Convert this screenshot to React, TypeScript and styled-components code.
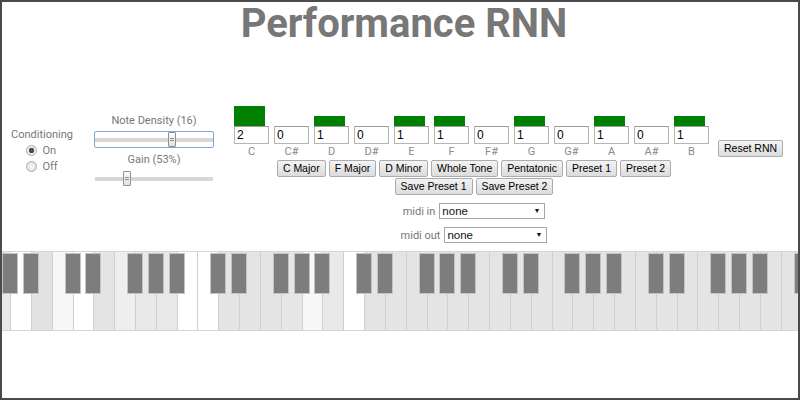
import styled, { createGlobalStyle } from "styled-components";

const GlobalStyle = createGlobalStyle`
  html, body {
    margin: 0;
    padding: 0;
    background: #fff;
  }
  body {
    font-family: Roboto, "Liberation Sans", Arial, sans-serif;
  }
`;

const Frame = styled.div`
  width: 800px;
  height: 400px;
  box-sizing: border-box;
  border: 2px solid #4a4a4a;
  overflow: hidden;
  background: #fff;
`;

const Title = styled.h1`
  margin: 0;
  padding-left: 8px;
  text-align: center;
  font-family: Roboto, "Liberation Sans", sans-serif;
  font-weight: 700;
  font-size: 40px;
  line-height: 44px;
  color: #777;
`;

const Controls = styled.div`
  display: flex;
  align-items: center;
  margin-top: 60px;
`;

const ConditioningCol = styled.div`
  width: 80px;
  display: flex;
  flex-direction: column;
  align-items: center;
  font-size: 11px;
  color: #777;
`;

const ColLabel = styled.div`
  line-height: 16px;
`;

const RadioGroup = styled.div`
  display: flex;
  flex-direction: column;
  align-items: flex-start;
`;

const RadioRow = styled.label`
  display: flex;
  align-items: center;
  gap: 5px;
  height: 16px;
  line-height: 16px;
`;

const RadioDot = styled.span<{ $checked?: boolean }>`
  width: 11px;
  height: 11px;
  box-sizing: border-box;
  border-radius: 50%;
  border: 1px solid #a8a8a8;
  background: ${(p) =>
    p.$checked
      ? "radial-gradient(circle, #4c4c4c 0 2.5px, #ededed 3px)"
      : "radial-gradient(circle, #f6f6f6 0, #dcdcdc 100%)"};
`;

const SliderCol = styled.div`
  width: 120px;
  margin-left: 12px;
  display: flex;
  flex-direction: column;
  align-items: center;
  font-size: 11px;
  color: #777;
`;

const SliderLabel = styled.div<{ $gap?: number }>`
  line-height: 14px;
  margin-top: ${(p) => p.$gap ?? 0}px;
`;

const Range = styled.input<{ $focused?: boolean }>`
  -webkit-appearance: none;
  appearance: none;
  width: 120px;
  height: 17px;
  margin: 3px 0 0;
  box-sizing: border-box;
  border: 1px solid ${(p) => (p.$focused ? "#7fa7de" : "transparent")};
  border-radius: 2px;
  background: transparent;
  outline: none;

  &::-webkit-slider-runnable-track {
    height: 4px;
    background: #dcd6d2;
  }

  &::-webkit-slider-thumb {
    -webkit-appearance: none;
    width: 8px;
    height: 15px;
    margin-top: -6px;
    box-sizing: border-box;
    border: 1px solid #8e8e8e;
    border-radius: 1px;
    background:
      linear-gradient(
          to bottom,
          transparent 5px,
          #8a8a8a 5px,
          #8a8a8a 6px,
          transparent 6px,
          transparent 7px,
          #8a8a8a 7px,
          #8a8a8a 8px,
          transparent 8px
        )
        center / 4px 100% no-repeat,
      linear-gradient(#fbfbfb, #e2e2e2);
  }
`;

const Histogram = styled.div`
  width: 480px;
  margin-left: 20px;
  display: flex;
  flex-direction: column;
`;

const PitchRow = styled.div`
  display: flex;
`;

const PitchCell = styled.div`
  width: 40px;
  display: flex;
  flex-direction: column;
`;

const BarArea = styled.div`
  height: 20px;
  display: flex;
  align-items: flex-end;
`;

const Bar = styled.div`
  width: 31px;
  background: #008000;
`;

const CountInput = styled.input`
  width: 35px;
  height: 18px;
  box-sizing: border-box;
  margin: 0;
  padding: 0 2px;
  border: 1px solid #b5b5b5;
  border-top-color: #9c9c9c;
  font-family: "Liberation Sans", Arial, sans-serif;
  font-size: 12px;
  color: #000;
  background: #fff;
`;

const NoteName = styled.div`
  width: 35px;
  text-align: center;
  font-size: 11px;
  line-height: 16px;
  color: #8a8a8a;
`;

const ButtonRow = styled.div<{ $gap?: number }>`
  display: flex;
  justify-content: center;
  gap: 3px;
  margin-top: ${(p) => p.$gap ?? 0}px;
`;

const Button = styled.button`
  height: 17px;
  margin: 0;
  padding: 0 5px;
  box-sizing: border-box;
  border: 1px solid #acacac;
  border-radius: 2px;
  background: linear-gradient(#f3f3f3, #dcdcdc);
  font-family: "Liberation Sans", Arial, sans-serif;
  font-size: 10.5px;
  line-height: 15px;
  color: #000;
  white-space: nowrap;
`;

const ResetButton = styled(Button)`
  margin-left: 4px;
  margin-bottom: 4px;
`;

const MidiBlock = styled.div`
  width: 480px;
  margin: 8px 0 0 232px;
  display: flex;
  flex-direction: column;
  gap: 8px;
`;

const MidiRow = styled.div`
  display: flex;
  justify-content: center;
  align-items: center;
  gap: 4px;
  height: 16px;
  font-size: 11px;
  color: #777;
`;

const SelectBox = styled.div<{ $width: number }>`
  position: relative;
  width: ${(p) => p.$width}px;
  height: 16px;
`;

const Select = styled.select`
  -webkit-appearance: none;
  appearance: none;
  width: 100%;
  height: 100%;
  box-sizing: border-box;
  margin: 0;
  padding: 0 2px;
  border: 1px solid #a6a6a6;
  border-radius: 0;
  background: #fff;
  font-family: "Liberation Sans", Arial, sans-serif;
  font-size: 11.5px;
  color: #111;
`;

const SelectArrow = styled.span`
  position: absolute;
  right: 5px;
  top: 4px;
  font-size: 7px;
  line-height: 8px;
  color: #111;
  pointer-events: none;
`;

const Piano = styled.div`
  position: relative;
  margin-top: 8px;
  height: 80px;
  box-sizing: border-box;
  border-top: 1px solid #d6d6d6;
  border-bottom: 1px solid #d6d6d6;
  overflow: hidden;
`;

const KeyRow = styled.div`
  display: flex;
  height: 100%;
  margin-left: -12.8px;
`;

const WhiteKey = styled.div<{ $shade: string }>`
  position: relative;
  flex: 0 0 20.833px;
  height: 100%;
  box-sizing: border-box;
  border-left: 1px solid #cfcfcf;
  background: ${(p) => p.$shade};
`;

const BlackKey = styled.div`
  position: absolute;
  z-index: 2;
  top: 1px;
  right: -8px;
  width: 16px;
  height: 41px;
  box-sizing: border-box;
  border: 1px solid #c4c4c4;
  background: #7d7d7d;
`;

const pitches = [
  { name: "C", count: 2 },
  { name: "C#", count: 0 },
  { name: "D", count: 1 },
  { name: "D#", count: 0 },
  { name: "E", count: 1 },
  { name: "F", count: 1 },
  { name: "F#", count: 0 },
  { name: "G", count: 1 },
  { name: "G#", count: 0 },
  { name: "A", count: 1 },
  { name: "A#", count: 0 },
  { name: "B", count: 1 },
];

const presets = [
  "C Major",
  "F Major",
  "D Minor",
  "Whole Tone",
  "Pentatonic",
  "Preset 1",
  "Preset 2",
];

// white keys begin on a G that is partly cut off at the left edge
const whiteNames = ["G", "A", "B", "C", "D", "E", "F"];
const lit = [
  "#e8e8e8", "#ffffff", "#e2e2e2", "#f7f7f7", "#ffffff", "#e4e4e4",
  "#eeeeee", "#e8e8e8", "#e8e8e8", "#ffffff", "#ffffff", "#e4e4e4",
  "#e4e4e4", "#e4e4e4", "#e6e6e6", "#f7f7f7", "#e9e9e9", "#ffffff",
];
const hasSharp = new Set(["C", "D", "F", "G", "A"]);
const keys = Array.from({ length: 40 }, (_, i) => ({
  name: whiteNames[i % 7],
  shade: lit[i] ?? "#e4e4e4",
}));

export default function App() {
  return (
    <>
      <GlobalStyle />
      <Frame>
        <Title>Performance RNN</Title>

        <Controls>
          <ConditioningCol>
            <ColLabel>Conditioning</ColLabel>
            <RadioGroup>
              <RadioRow>
                <RadioDot $checked />
                On
              </RadioRow>
              <RadioRow>
                <RadioDot />
                Off
              </RadioRow>
            </RadioGroup>
          </ConditioningCol>

          <SliderCol>
            <SliderLabel>Note Density (16)</SliderLabel>
            <Range type="range" min={0} max={100} defaultValue={66} $focused />
            <SliderLabel $gap={5}>Gain (53%)</SliderLabel>
            <Range type="range" min={0} max={100} defaultValue={25} />
          </SliderCol>

          <Histogram>
            <PitchRow>
              {pitches.map((p) => (
                <PitchCell key={p.name}>
                  <BarArea>
                    {p.count > 0 && <Bar style={{ height: p.count * 10 }} />}
                  </BarArea>
                  <CountInput type="text" defaultValue={p.count} />
                  <NoteName>{p.name}</NoteName>
                </PitchCell>
              ))}
            </PitchRow>
            <ButtonRow>
              {presets.map((b) => (
                <Button key={b}>{b}</Button>
              ))}
            </ButtonRow>
            <ButtonRow $gap={1}>
              <Button>Save Preset 1</Button>
              <Button>Save Preset 2</Button>
            </ButtonRow>
          </Histogram>

          <ResetButton>Reset RNN</ResetButton>
        </Controls>

        <MidiBlock>
          <MidiRow>
            midi in
            <SelectBox $width={106}>
              <Select defaultValue="none">
                <option value="none">none</option>
              </Select>
              <SelectArrow>▼</SelectArrow>
            </SelectBox>
          </MidiRow>
          <MidiRow>
            midi out
            <SelectBox $width={103}>
              <Select defaultValue="none">
                <option value="none">none</option>
              </Select>
              <SelectArrow>▼</SelectArrow>
            </SelectBox>
          </MidiRow>
        </MidiBlock>

        <Piano>
          <KeyRow>
            {keys.map((k, i) => (
              <WhiteKey key={i} $shade={k.shade}>
                {hasSharp.has(k.name) && <BlackKey />}
              </WhiteKey>
            ))}
          </KeyRow>
        </Piano>
      </Frame>
    </>
  );
}
